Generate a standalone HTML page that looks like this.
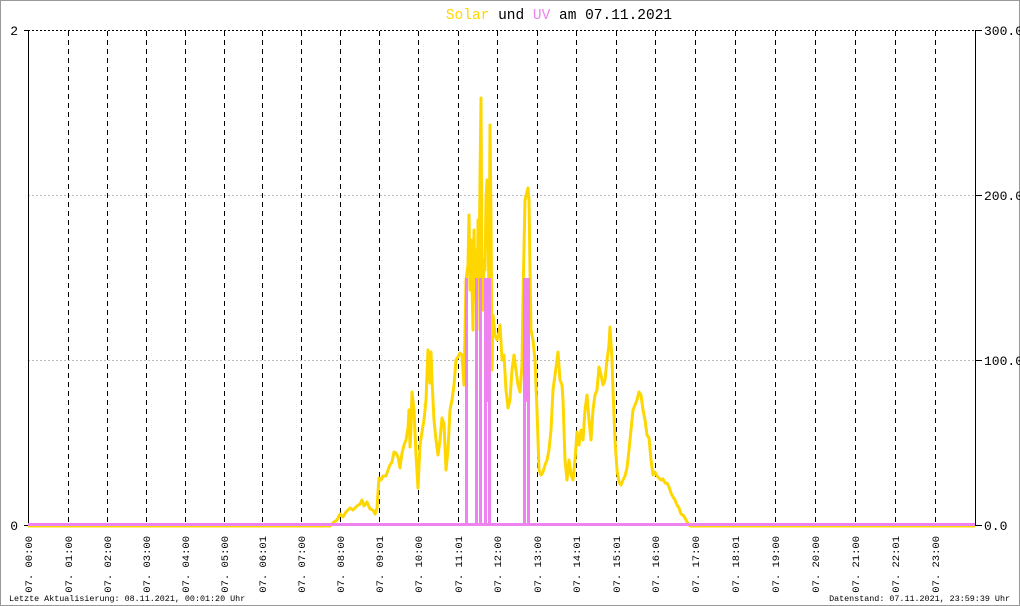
<!DOCTYPE html>
<html><head><meta charset="utf-8"><style>
html,body{margin:0;padding:0;background:#fff;}
svg{display:block;}
text{font-family:"Liberation Mono","DejaVu Sans Mono",monospace;}
</style></head><body>
<svg width="1020" height="606" viewBox="0 0 1020 606" xmlns="http://www.w3.org/2000/svg">
<rect x="0.5" y="0.5" width="1019" height="605" fill="#fff" stroke="#999" stroke-width="1"/>
<text x="559" y="19" font-size="14.5" text-anchor="middle"><tspan fill="#ffd700">Solar</tspan> und <tspan fill="#ee82ee">UV</tspan> am 07.11.2021</text>
<!-- horizontal grid -->
<line x1="28" y1="30.5" x2="975" y2="30.5" stroke="#000" stroke-dasharray="2,2"/>
<line x1="28" y1="195.5" x2="975" y2="195.5" stroke="#bbb" stroke-dasharray="2,2"/>
<line x1="28" y1="360.5" x2="975" y2="360.5" stroke="#bbb" stroke-dasharray="2,2"/>
<!-- vertical dashes -->
<g stroke="#000" stroke-dasharray="5,4" stroke-width="1">
<line x1="68.5" y1="31" x2="68.5" y2="525"/><line x1="107.5" y1="31" x2="107.5" y2="525"/><line x1="146.5" y1="31" x2="146.5" y2="525"/><line x1="185.5" y1="31" x2="185.5" y2="525"/><line x1="224.5" y1="31" x2="224.5" y2="525"/><line x1="262.5" y1="31" x2="262.5" y2="525"/><line x1="301.5" y1="31" x2="301.5" y2="525"/><line x1="340.5" y1="31" x2="340.5" y2="525"/><line x1="379.5" y1="31" x2="379.5" y2="525"/><line x1="418.5" y1="31" x2="418.5" y2="525"/><line x1="458.5" y1="31" x2="458.5" y2="525"/><line x1="497.5" y1="31" x2="497.5" y2="525"/><line x1="537.5" y1="31" x2="537.5" y2="525"/><line x1="576.5" y1="31" x2="576.5" y2="525"/><line x1="616.5" y1="31" x2="616.5" y2="525"/><line x1="655.5" y1="31" x2="655.5" y2="525"/><line x1="695.5" y1="31" x2="695.5" y2="525"/><line x1="735.5" y1="31" x2="735.5" y2="525"/><line x1="775.5" y1="31" x2="775.5" y2="525"/><line x1="815.5" y1="31" x2="815.5" y2="525"/><line x1="855.5" y1="31" x2="855.5" y2="525"/><line x1="895.5" y1="31" x2="895.5" y2="525"/><line x1="935.5" y1="31" x2="935.5" y2="525"/>
</g>
<!-- axes -->
<line x1="28.5" y1="30" x2="28.5" y2="526" stroke="#000"/>
<line x1="24" y1="30.5" x2="28" y2="30.5" stroke="#000"/>
<line x1="24" y1="525.5" x2="28" y2="525.5" stroke="#000"/>
<line x1="975.5" y1="30" x2="975.5" y2="526" stroke="#000"/>
<line x1="975" y1="30.5" x2="982" y2="30.5" stroke="#000"/>
<line x1="975" y1="195.5" x2="982" y2="195.5" stroke="#000"/>
<line x1="975" y1="360.5" x2="982" y2="360.5" stroke="#000"/>
<line x1="975" y1="525.5" x2="982" y2="525.5" stroke="#000"/>
<text x="18" y="35" font-size="13" text-anchor="end">2</text>
<text x="18" y="530" font-size="13" text-anchor="end">0</text>
<g font-size="13">
<text x="984" y="35">300.0</text><text x="984" y="200">200.0</text><text x="984" y="365">100.0</text><text x="984" y="530">0.0</text>
</g>
<!-- solar -->
<polyline fill="none" stroke="#ffd700" stroke-width="3" stroke-linejoin="round" points="28,526 330,526 334,522 337,520 340,514 343,517 346,512 350,508 353,510 357,506 360,504 362,500 364,506 367,502 370,509 373,510 375,514 377,508 379,478 381,480 383,476 386,476 388,470 390,465 392,462 394,452 396,453 398,457 400,468 402,453 404,445 406,440 408,428 409,410 410,447 411,430 412,392 414,410 416,455 418,488 420,445 422,432 424,420 426,400 428,350 430,383 431,352 432,380 434,420 436,440 438,455 440,440 442,418 444,424 446,470 448,450 450,410 452,400 454,385 456,360 458,357 460,353 462,355 464,385 466,280 468,265 469,215 470,290 471,240 473,330 474,230 475,300 476,250 477,330 478,220 479,280 480,180 481,98 482,280 483,310 484,260 485,270 486,200 487,180 488,220 489,300 490,125 491,220 492,370 493,315 495,335 497,340 499,333 500,325 502,360 504,355 506,390 508,408 510,400 512,370 514,355 516,370 518,385 520,392 522,365 523,298 525,200 527,192 528,188 529,200 530,270 531,330 533,340 535,360 537,410 539,470 541,475 543,472 545,465 547,460 549,450 551,430 553,390 555,375 557,360 558,352 560,380 562,385 563,400 565,460 567,480 569,460 571,475 573,480 575,460 577,432 579,445 581,430 583,440 585,410 587,395 589,420 591,440 593,410 595,395 597,390 599,367 601,375 603,385 605,380 607,360 609,345 610,327 612,360 613,390 615,440 617,470 619,482 621,485 623,480 625,476 627,468 629,450 631,430 633,410 635,405 637,400 639,392 641,395 643,410 645,420 647,435 649,438 651,460 653,475 655,472 657,476 659,478 661,480 663,479 665,483 667,483 669,487 671,493 673,497 675,500 677,505 679,508 681,514 683,515 685,518 687,522 690,526 975,526"/>
<!-- UV -->
<g fill="#ee82ee">
<rect x="28" y="523" width="947" height="3"/>
<rect x="465" y="278" width="3" height="247"/>
<rect x="475" y="278" width="3" height="247"/>
<rect x="479" y="278" width="3" height="247"/>
<rect x="484" y="278" width="3" height="247"/>
<rect x="487" y="278" width="4" height="124"/>
<rect x="488" y="278" width="3" height="247"/>
<rect x="523" y="278" width="3" height="247"/>
<rect x="526" y="278" width="3" height="124"/>
<rect x="527" y="278" width="3" height="247"/>
</g>
<!-- x labels -->
<g font-size="10.5" text-anchor="end">
<text transform="translate(32,536) rotate(-90)">07. 00:00</text>
<text transform="translate(72,536) rotate(-90)">07. 01:00</text>
<text transform="translate(111,536) rotate(-90)">07. 02:00</text>
<text transform="translate(150,536) rotate(-90)">07. 03:00</text>
<text transform="translate(189,536) rotate(-90)">07. 04:00</text>
<text transform="translate(228,536) rotate(-90)">07. 05:00</text>
<text transform="translate(266,536) rotate(-90)">07. 06:01</text>
<text transform="translate(305,536) rotate(-90)">07. 07:00</text>
<text transform="translate(344,536) rotate(-90)">07. 08:00</text>
<text transform="translate(383,536) rotate(-90)">07. 09:01</text>
<text transform="translate(422,536) rotate(-90)">07. 10:00</text>
<text transform="translate(462,536) rotate(-90)">07. 11:01</text>
<text transform="translate(501,536) rotate(-90)">07. 12:00</text>
<text transform="translate(541,536) rotate(-90)">07. 13:00</text>
<text transform="translate(580,536) rotate(-90)">07. 14:01</text>
<text transform="translate(620,536) rotate(-90)">07. 15:01</text>
<text transform="translate(659,536) rotate(-90)">07. 16:00</text>
<text transform="translate(699,536) rotate(-90)">07. 17:00</text>
<text transform="translate(739,536) rotate(-90)">07. 18:01</text>
<text transform="translate(779,536) rotate(-90)">07. 19:00</text>
<text transform="translate(819,536) rotate(-90)">07. 20:00</text>
<text transform="translate(859,536) rotate(-90)">07. 21:00</text>
<text transform="translate(899,536) rotate(-90)">07. 22:01</text>
<text transform="translate(939,536) rotate(-90)">07. 23:00</text>
</g>
<text x="9" y="601" font-size="8.4">Letzte Aktualisierung: 08.11.2021, 00:01:20 Uhr</text>
<text x="1010" y="601" font-size="8.4" text-anchor="end">Datenstand: 07.11.2021, 23:59:39 Uhr</text>
</svg>
</body></html>
